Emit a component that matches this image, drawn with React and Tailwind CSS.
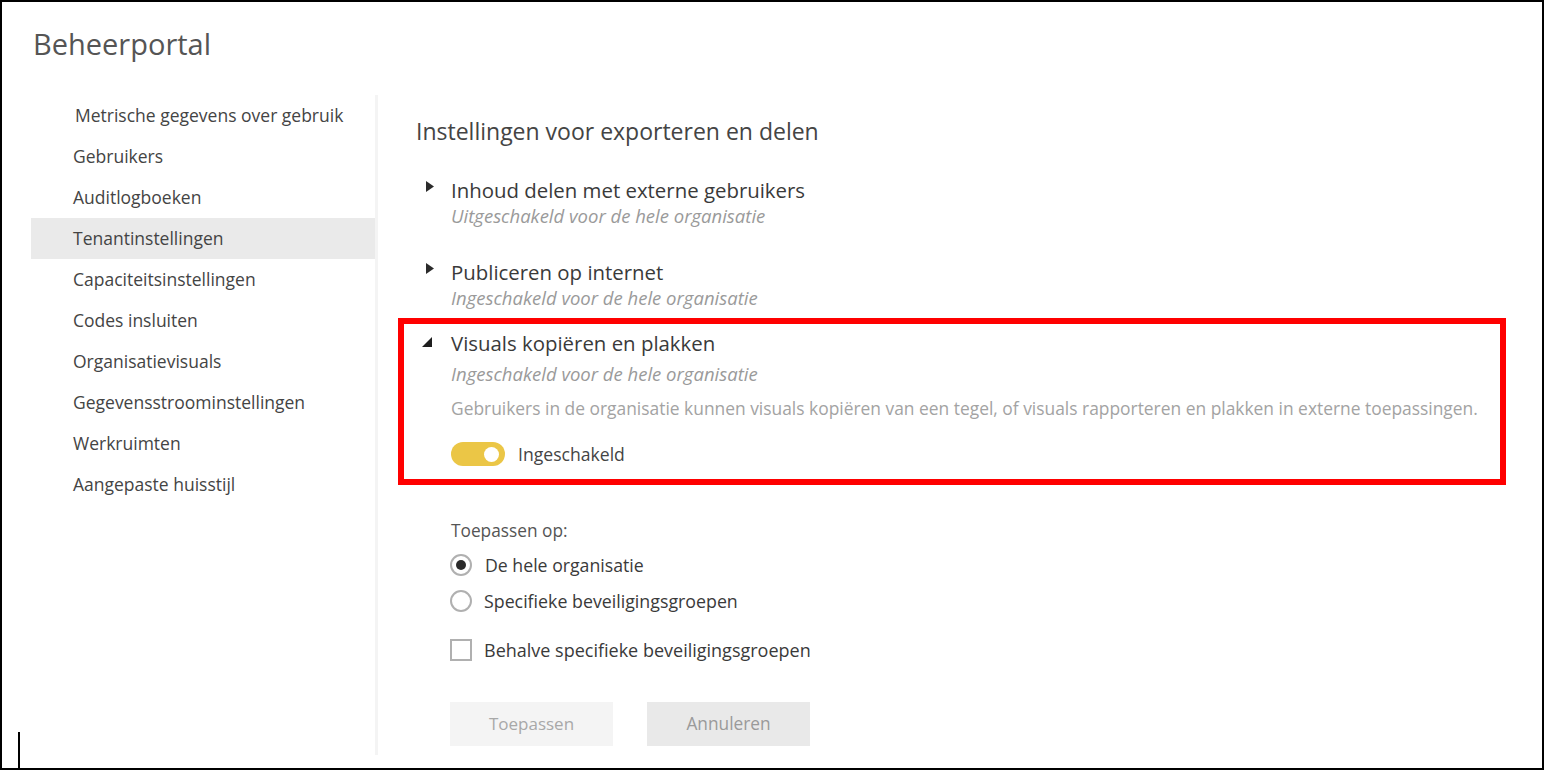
import React from "react";

const navItems = [
  "Metrische gegevens over gebruik",
  "Gebruikers",
  "Auditlogboeken",
  "Tenantinstellingen",
  "Capaciteitsinstellingen",
  "Codes insluiten",
  "Organisatievisuals",
  "Gegevensstroominstellingen",
  "Werkruimten",
  "Aangepaste huisstijl",
];

function TriRight() {
  return (
    <svg width="8" height="11" viewBox="0 0 8 11" className="block">
      <path d="M0 0 L8 5.5 L0 11 Z" fill="#2b2b2b" />
    </svg>
  );
}

function TriDown() {
  return (
    <svg width="10" height="10" viewBox="0 0 10 10" className="block">
      <path d="M10 0 L10 10 L0 10 Z" fill="#1e1e1e" />
    </svg>
  );
}

export default function App() {
  return (
    <div className="relative w-[1544px] h-[770px] box-border border-2 border-black bg-white font-['Open_Sans',sans-serif] overflow-hidden">
      <div className="h-[93px] pl-[31px] pt-[20px]">
        <h1 className="text-[29px] leading-[44px] text-[#555555] font-normal">
          Beheerportal
        </h1>
      </div>
      <div className="flex">
        <nav className="w-[347px] ml-[29px] h-[660px] border-r-[3px] border-[#f4f4f4] box-border">
          {navItems.map((t, i) => (
            <div
              key={t}
              className={
                "h-[41px] flex items-center text-[17.5px] text-[#444444] whitespace-nowrap " +
                (i === 0 ? "pl-[44px] " : "pl-[42px] ") +
                (i === 3 ? "bg-[#eaeaea]" : "")
              }
            >
              {t}
            </div>
          ))}
        </nav>
        <main className="flex-1 pl-[20px]">
          <h2 className="ml-[18px] mt-[22px] text-[23px] leading-[28px] text-[#444444] font-normal">
            Instellingen voor exporteren en delen
          </h2>

          <div className="ml-[18px] mt-[32px] flex">
            <div className="w-[35px] pl-[10px] pt-[4px]">
              <TriRight />
            </div>
            <div>
              <div className="text-[20.4px] leading-[26px] text-[#3a3a3a]">
                Inhoud delen met externe gebruikers
              </div>
              <div className="text-[18.5px] leading-[26px] italic text-[#9a9a9a]">
                Uitgeschakeld voor de hele organisatie
              </div>
            </div>
          </div>

          <div className="ml-[18px] mt-[30px] flex">
            <div className="w-[35px] pl-[10px] pt-[4px]">
              <TriRight />
            </div>
            <div>
              <div className="text-[20.4px] leading-[26px] text-[#3a3a3a]">
                Publiceren op internet
              </div>
              <div className="text-[18.5px] leading-[26px] italic text-[#9a9a9a]">
                Ingeschakeld voor de hele organisatie
              </div>
            </div>
          </div>

          <div className="mt-[7px] w-[1108px] box-border border-[6px] border-[#ff0000] pt-[6px] pb-[13px] pl-[12px]">
            <div className="flex">
              <div className="w-[35px] pl-[6px] pt-[7px]">
                <TriDown />
              </div>
              <div>
                <div className="text-[20.4px] leading-[26px] text-[#3a3a3a]">
                  Visuals kopiëren en plakken
                </div>
                <div className="mt-[5px] text-[18.5px] leading-[26px] italic text-[#9a9a9a]">
                  Ingeschakeld voor de hele organisatie
                </div>
                <div className="mt-[9px] text-[17.4px] leading-[24px] text-[#a3a3a3] whitespace-nowrap">
                  Gebruikers in de organisatie kunnen visuals kopiëren van een tegel, of visuals rapporteren en plakken in externe toepassingen.
                </div>
                <div className="mt-[22px] flex items-center gap-[13px]">
                  <div className="w-[54px] h-[24px] rounded-full bg-[#ebc646] flex items-center justify-end pr-[6px]">
                    <div className="w-[15px] h-[15px] rounded-full bg-white" />
                  </div>
                  <span className="text-[17.6px] leading-[24px] text-[#444444]">Ingeschakeld</span>
                </div>
              </div>
            </div>
          </div>

          <div className="ml-[53px] mt-[35px] text-[17.3px] leading-[22px] text-[#555555]">
            Toepassen op:
          </div>
          <div className="ml-[52px] mt-[5px]">
            <div className="h-[36px] flex items-center gap-[13px]">
              <div className="w-[22px] h-[22px] rounded-full border-2 border-[#b0b0b0] box-border flex items-center justify-center">
                <div className="w-[10px] h-[10px] rounded-full bg-[#2a2a2a]" />
              </div>
              <span className="text-[17.7px] text-[#3a3a3a]">De hele organisatie</span>
            </div>
            <div className="h-[36px] flex items-center gap-[12px]">
              <div className="w-[22px] h-[22px] rounded-full border-2 border-[#b0b0b0] box-border" />
              <span className="text-[17.8px] text-[#3a3a3a]">Specifieke beveiligingsgroepen</span>
            </div>
            <div className="mt-[13px] h-[36px] flex items-center gap-[12px]">
              <div className="w-[22px] h-[22px] border-2 border-[#b0b0b0] box-border" />
              <span className="text-[18px] text-[#3a3a3a]">Behalve specifieke beveiligingsgroepen</span>
            </div>
            <div className="mt-[34px] flex gap-[34px]">
              <div className="w-[163px] h-[44px] bg-[#f4f4f4] flex items-center justify-center text-[17px] text-[#a8a8a8]">
                Toepassen
              </div>
              <div className="w-[163px] h-[44px] bg-[#e9e9e9] flex items-center justify-center text-[17.3px] text-[#9a9a9a]">
                Annuleren
              </div>
            </div>
          </div>
        </main>
      </div>
      <div className="absolute left-[16px] bottom-0 w-[2px] h-[36px] bg-black" />
    </div>
  );
}
